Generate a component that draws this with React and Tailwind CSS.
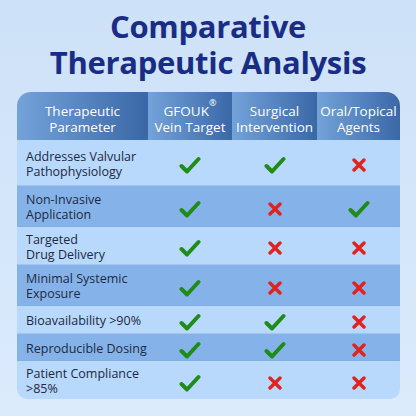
import React from "react";

const rows = [
  { label: ["Addresses Valvular", "Pathophysiology"], h: "h-[46px]", dark: false, v: [true, true, false] },
  { label: ["Non-Invasive", "Application"], h: "h-[41px]", dark: true, v: [true, false, true] },
  { label: ["Targeted", "Drug Delivery"], h: "h-[38px]", dark: false, v: [true, false, false] },
  { label: ["Minimal Systemic", "Exposure"], h: "h-[41px]", dark: true, v: [true, false, false] },
  { label: ["Bioavailability >90%"], h: "h-[28px]", dark: false, v: [true, true, false] },
  { label: ["Reproducible Dosing"], h: "h-[27px]", dark: true, v: [true, true, false] },
  { label: ["Patient Compliance", ">85%"], h: "h-[38px]", dark: false, v: [true, false, false] },
];

const Check = () => (
  <svg width="22" height="18" viewBox="0 0 22 18" className="mt-[5px]">
    <path
      d="M2.5 10 L8 15.5 L19.5 3"
      fill="none"
      stroke="#1f8c17"
      strokeWidth="4"
      strokeLinecap="round"
      strokeLinejoin="round"
    />
  </svg>
);

const Cross = () => (
  <svg width="14" height="14" viewBox="0 0 14 14" className="mt-[5px]">
    <path
      d="M2 2 L12 12 M12 2 L2 12"
      fill="none"
      stroke="#e0231f"
      strokeWidth="3.4"
      strokeLinecap="round"
    />
  </svg>
);

const HeaderCell = ({ children, className }) => (
  <div
    className={`flex flex-col items-center justify-center pt-[6px] text-white text-[13.5px] leading-[16.5px] bg-gradient-to-r from-[#74a3da] to-[#3a68a7] ${className}`}
  >
    {children}
  </div>
);

export default function App() {
  return (
    <div
      className="w-[416px] h-[416px] overflow-hidden bg-gradient-to-b from-[#cde1f8] to-[#dbebfc] flex flex-col items-center"
      style={{ fontFamily: "'Open Sans', 'Noto Sans', sans-serif" }}
    >
      <h1 className="mt-[8px] text-center font-bold text-[#1a2d86] text-[31px] leading-[36px] tracking-[-0.3px]">
        Comparative
        <br />
        Therapeutic Analysis
      </h1>

      <div className="mt-[12px] w-[383px] shrink-0 ml-[1px] rounded-t-[14px] rounded-b-[10px] overflow-hidden">
        <div className="flex h-[48px]">
          <HeaderCell className="w-[131px]">
            <span>Therapeutic</span>
            <span>Parameter</span>
          </HeaderCell>
          <HeaderCell className="w-[84px]">
            <span>
              GFOUK<sup className="text-[9px] align-super">®</sup>
            </span>
            <span className="whitespace-nowrap">Vein Target</span>
          </HeaderCell>
          <HeaderCell className="w-[85px]">
            <span>Surgical</span>
            <span className="whitespace-nowrap">Intervention</span>
          </HeaderCell>
          <HeaderCell className="w-[83px]">
            <span className="whitespace-nowrap">Oral/Topical</span>
            <span>Agents</span>
          </HeaderCell>
        </div>

        {rows.map((r, i) => (
          <div
            key={i}
            className={`flex items-center ${r.h} ${r.dark ? "bg-[#85b3e9]" : "bg-[#b8d8fc]"} ${
              i < rows.length - 1 ? "border-b border-[#7fa9dc]/40" : ""
            }`}
          >
            <div className="w-[131px] pl-[9px] pt-[2px] text-[12.5px] leading-[15px] text-[#1d2a44]">
              {r.label.map((l, j) => (
                <div key={j}>{l}</div>
              ))}
            </div>
            {r.v.map((ok, j) => (
              <div
                key={j}
                className={`flex justify-center ${j === 0 ? "w-[84px]" : j === 1 ? "w-[85px]" : "w-[83px]"}`}
              >
                {ok ? <Check /> : <Cross />}
              </div>
            ))}
          </div>
        ))}
      </div>
    </div>
  );
}
